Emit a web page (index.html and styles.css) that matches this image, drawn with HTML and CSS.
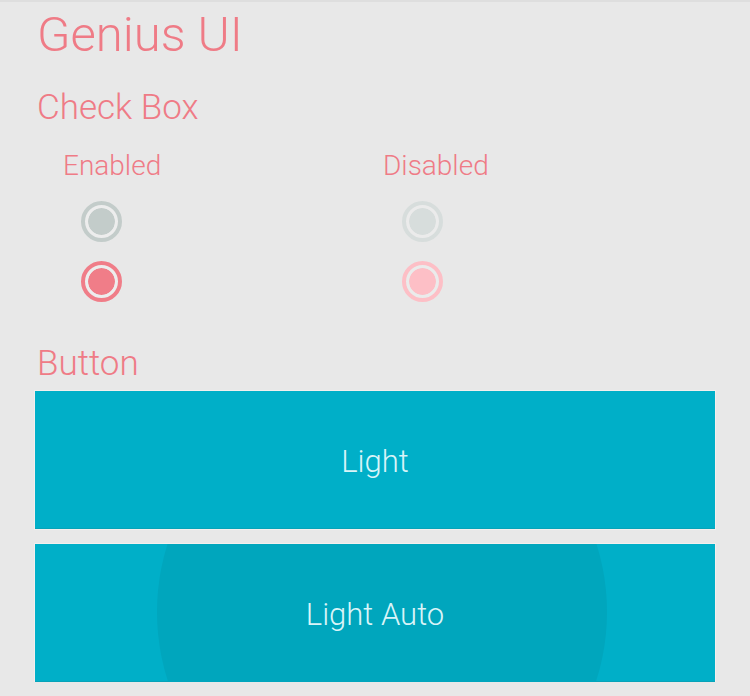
FILE: index.html
```html
<!DOCTYPE html>
<html>
<head>
<meta charset="utf-8">
<link rel="stylesheet" href="styles.css">
</head>
<body>
<div class="page">
  <h1 class="title">Genius UI</h1>
  <h2 class="section">Check Box</h2>
  <div class="checks">
    <div class="col">
      <div class="label">Enabled</div>
      <span class="radio gray"></span>
      <span class="radio pink"></span>
    </div>
    <div class="col">
      <div class="label">Disabled</div>
      <span class="radio gray-dis"></span>
      <span class="radio pink-dis"></span>
    </div>
  </div>
  <h2 class="section section-btn">Button</h2>
  <div class="buttons">
    <button class="btn">Light</button>
    <button class="btn btn-ripple"><span class="ripple"></span><span class="btn-text">Light Auto</span></button>
  </div>
</div>
</body>
</html>
```
FILE: styles.css
```css
* { box-sizing: border-box; }
html, body { margin: 0; padding: 0; }
body {
  background: #e8e8e8;
  font-family: Roboto, "Noto Sans", sans-serif;
  font-weight: 300;
  color: #ef7b86;
  border-top: 2px solid #dedede;
}
.page {
  padding: 0 35px;
}
.title {
  margin: 0;
  padding: 3px 0 0 2px;
  font-size: 49px;
  line-height: 60px;
  font-weight: 300;
}
.section {
  margin: 22px 0 0;
  padding-left: 2px;
  font-size: 35px;
  line-height: 41px;
  font-weight: 300;
}
.checks {
  display: grid;
  grid-template-columns: 320px 320px;
  padding-left: 28px;
  margin-top: 22px;
}
.col {
  display: flex;
  flex-direction: column;
  align-items: flex-start;
}
.label {
  font-size: 28px;
  line-height: 32px;
  margin-bottom: 19px;
}
.radio {
  display: block;
  width: 41px;
  height: 41px;
  border-radius: 50%;
  border: 4px solid;
  padding: 3px;
  background-clip: content-box;
  margin-left: 18px;
  margin-bottom: 19px;
}
.col + .col .radio { margin-left: 19px; }
.gray { border-color: #c3ccca; background-color: #c3ccca; box-shadow: inset 0 0 0 3px #ededed; }
.pink { border-color: #f07d88; background-color: #f07d88; box-shadow: inset 0 0 0 3px #ededed; }
.gray-dis { border-color: #d7dddc; background-color: #d7dddc; box-shadow: inset 0 0 0 3px #ebebeb; }
.pink-dis { border-color: #fdbfc6; background-color: #fdbfc6; box-shadow: inset 0 0 0 3px #ebebeb; }
.section-btn { margin-top: 22px; }
.buttons {
  display: flex;
  flex-direction: column;
  gap: 15px;
  margin-top: 7px;
}
.btn {
  position: relative;
  overflow: hidden;
  height: 138px;
  width: 100%;
  border: none;
  background: #00afc8;
  color: #d9f4f8;
  font-family: Roboto, "Noto Sans", sans-serif;
  font-weight: 300;
  font-size: 31px;
  padding: 2px 0 0;
  box-shadow: 0 0 0 1px #f3efee, inset 0 -1px 0 #07a3b8;
}
.ripple {
  position: absolute;
  left: 122px;
  top: -157px;
  width: 450px;
  height: 450px;
  border-radius: 50%;
  background: #00a6bd;
}
.btn-text { position: relative; }
```
